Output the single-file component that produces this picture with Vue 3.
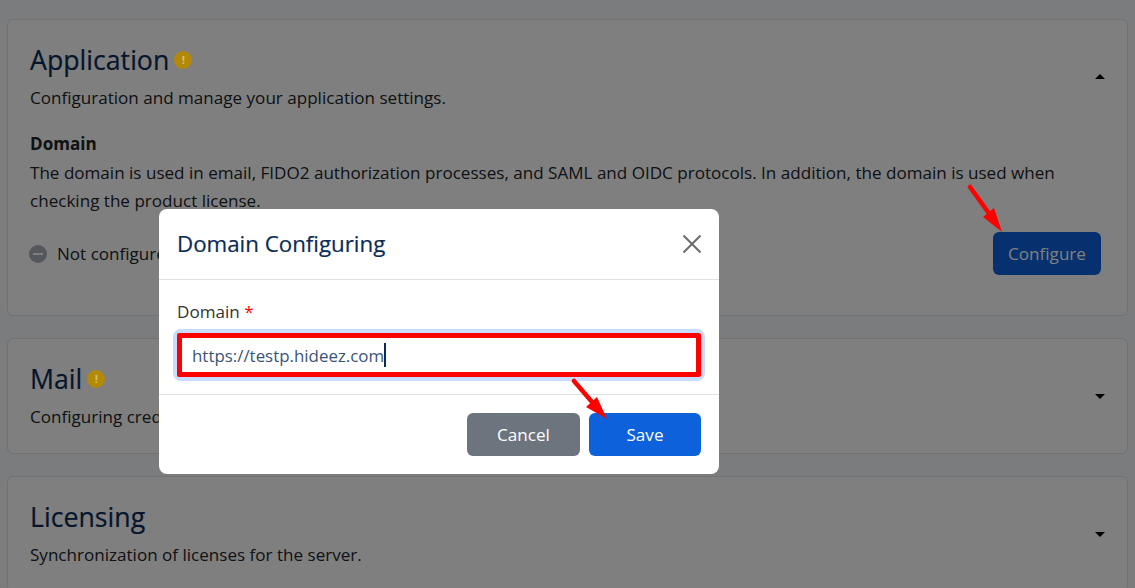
<template>
  <div class="page">
    <section class="card app-card">
      <div class="card-head">
        <div>
          <h2>Application <span class="warn">!</span></h2>
          <p class="sub">Configuration and manage your application settings.</p>
        </div>
        <span class="caret up"></span>
      </div>
      <h3>Domain</h3>
      <p class="desc">The domain is used in email, FIDO2 authorization processes, and SAML and OIDC protocols. In addition, the domain is used when checking the product license.</p>
      <div class="status-row">
        <div class="status">
          <span class="minus"></span>
          <span>Not configured</span>
        </div>
        <button class="btn primary">Configure</button>
      </div>
    </section>

    <section class="card">
      <div class="card-head">
        <div>
          <h2>Mail <span class="warn">!</span></h2>
          <p class="sub">Configuring credentials for the mail server.</p>
        </div>
        <span class="caret"></span>
      </div>
    </section>

    <section class="card">
      <div class="card-head">
        <div>
          <h2>Licensing</h2>
          <p class="sub">Synchronization of licenses for the server.</p>
        </div>
        <span class="caret"></span>
      </div>
    </section>

    <div class="backdrop"></div>

    <div class="modal">
      <div class="modal-head">
        <h4>Domain Configuring</h4>
        <svg class="close" width="20" height="20" viewBox="0 0 20 20">
          <path d="M1.5 1.5 18.5 18.5M18.5 1.5 1.5 18.5" stroke="#6b6b6b" stroke-width="2" fill="none" />
        </svg>
      </div>
      <div class="modal-body">
        <label>Domain <span class="req">*</span></label>
        <div class="input-halo">
          <div class="input">
            <span>https://testp.hideez.com</span><i class="cursor"></i>
          </div>
        </div>
      </div>
      <div class="modal-foot">
        <button class="btn cancel">Cancel</button>
        <button class="btn save">Save</button>
      </div>
    </div>

    <svg class="arrow arrow-save" width="48" height="50" viewBox="0 0 48 50">
      <path d="M3 3 21 24" stroke="#f00" stroke-width="4.5" stroke-linecap="round" fill="none" />
      <path d="M15 29 26 19 36 41Z" fill="#f00" />
    </svg>
    <svg class="arrow arrow-conf" width="48" height="56" viewBox="0 0 48 56">
      <path d="M3 4 21 29" stroke="#f00" stroke-width="4.5" stroke-linecap="round" fill="none" />
      <path d="M16 34 27 25 35 49Z" fill="#f00" />
    </svg>
  </div>
</template>

<script setup>
</script>

<style>
html,
body {
  margin: 0;
  background: #fff;
}
</style>

<style scoped>
.page {
  position: relative;
  height: 588px;
  overflow: hidden;
  background: #f7f8fb;
  padding: 19px 7px 0;
  box-sizing: border-box;
  font-family: "Open Sans", "Noto Sans", sans-serif;
  font-size: 17.07px;
  line-height: 1.5;
  color: #212529;
}

.card {
  background: #fff;
  border: 1px solid #dee2e6;
  border-radius: 6px;
  padding: 21px 26px 18px 22px;
  margin-bottom: 22px;
  min-height: 116px;
  box-sizing: border-box;
}

.app-card {
  height: 297px;
}

.card-head {
  display: flex;
  justify-content: space-between;
  align-items: center;
}

h2 {
  margin: 0;
  font-size: 26.7px;
  font-weight: 500;
  line-height: 38px;
  color: #0a2b57;
  display: flex;
  align-items: center;
  gap: 5px;
  -webkit-text-stroke: 0.2px #0a2b57;
}

.warn {
  position: relative;
  z-index: 1;
  width: 18px;
  height: 18px;
  border-radius: 50%;
  background: #b38a07;
  color: #d8c070;
  font-size: 11px;
  font-weight: 700;
  line-height: 18px;
  text-align: center;
  -webkit-text-stroke: 0;
}

.sub {
  margin: 7px 0 0;
  line-height: 24px;
}

h3 {
  margin: 19px 0 0;
  font-size: 17.07px;
  font-weight: 700;
  line-height: 29px;
}

.desc {
  margin: 1px 0 0;
  line-height: 28px;
}

.caret {
  width: 0;
  height: 0;
  margin: 4px -4px 0 0;
  border-left: 5px solid transparent;
  border-right: 5px solid transparent;
  border-top: 5px solid #000;
}

.caret.up {
  border-top: 0;
  border-bottom: 5px solid #000;
  margin-top: 2px;
}

.status-row {
  display: flex;
  justify-content: space-between;
  align-items: center;
  margin-top: 17px;
}

.status {
  display: flex;
  align-items: center;
  gap: 10px;
  margin-left: -1px;
}

.minus {
  width: 18px;
  height: 18px;
  border-radius: 50%;
  background: #a8b0b8;
  position: relative;
}

.minus::after {
  content: "";
  position: absolute;
  left: 4px;
  right: 4px;
  top: 8px;
  height: 2px;
  background: #fff;
}

.btn {
  border: 0;
  border-radius: 6px;
  height: 43px;
  font: inherit;
  color: #fff;
}

.primary {
  width: 108px;
  background: #0d62dc;
}

.backdrop {
  position: absolute;
  inset: 0;
  background: #000;
  opacity: 0.5;
}

.modal {
  position: absolute;
  z-index: 2;
  left: 159px;
  top: 209px;
  width: 560px;
  height: 265px;
  background: #fff;
  border-radius: 8px;
  display: flex;
  flex-direction: column;
}

.modal-head {
  height: 71px;
  box-sizing: border-box;
  border-bottom: 1px solid #dee2e6;
  display: flex;
  justify-content: space-between;
  align-items: center;
  padding: 0 17px 0 18px;
}

h4 {
  margin: 0;
  font-size: 22.3px;
  font-weight: 500;
  color: #0a2b57;
  -webkit-text-stroke: 0.2px #0a2b57;
}

.close {
  display: block;
}

.modal-body {
  flex: 1;
  padding: 20px 18px 0;
  border-bottom: 1px solid #dee2e6;
}

label {
  display: block;
  line-height: 24px;
  color: #333;
}

.req {
  color: #f00;
}

.input-halo {
  margin: 5px -4px 0;
  padding: 4px;
  border-radius: 8px;
  background: #c9dcfb;
}

.input {
  height: 44px;
  box-sizing: border-box;
  border: 5px solid #f00;
  border-radius: 2px;
  background: #fff;
  padding: 1px 0 0 10px;
  display: flex;
  align-items: center;
  font-size: 16.9px;
  color: #3a5478;
}

.cursor {
  width: 2px;
  height: 24px;
  margin-top: -1px;
  background: #0a2b57;
}

.modal-foot {
  height: 79px;
  box-sizing: border-box;
  display: flex;
  justify-content: flex-end;
  align-items: center;
  gap: 9px;
  padding: 0 18px;
}

.cancel {
  width: 113px;
  background: #6c757d;
}

.save {
  width: 112px;
  background: #0d62dc;
}

.arrow {
  position: absolute;
  z-index: 3;
}

.arrow-save {
  left: 571px;
  top: 378px;
}

.arrow-conf {
  left: 967px;
  top: 183px;
}
</style>
